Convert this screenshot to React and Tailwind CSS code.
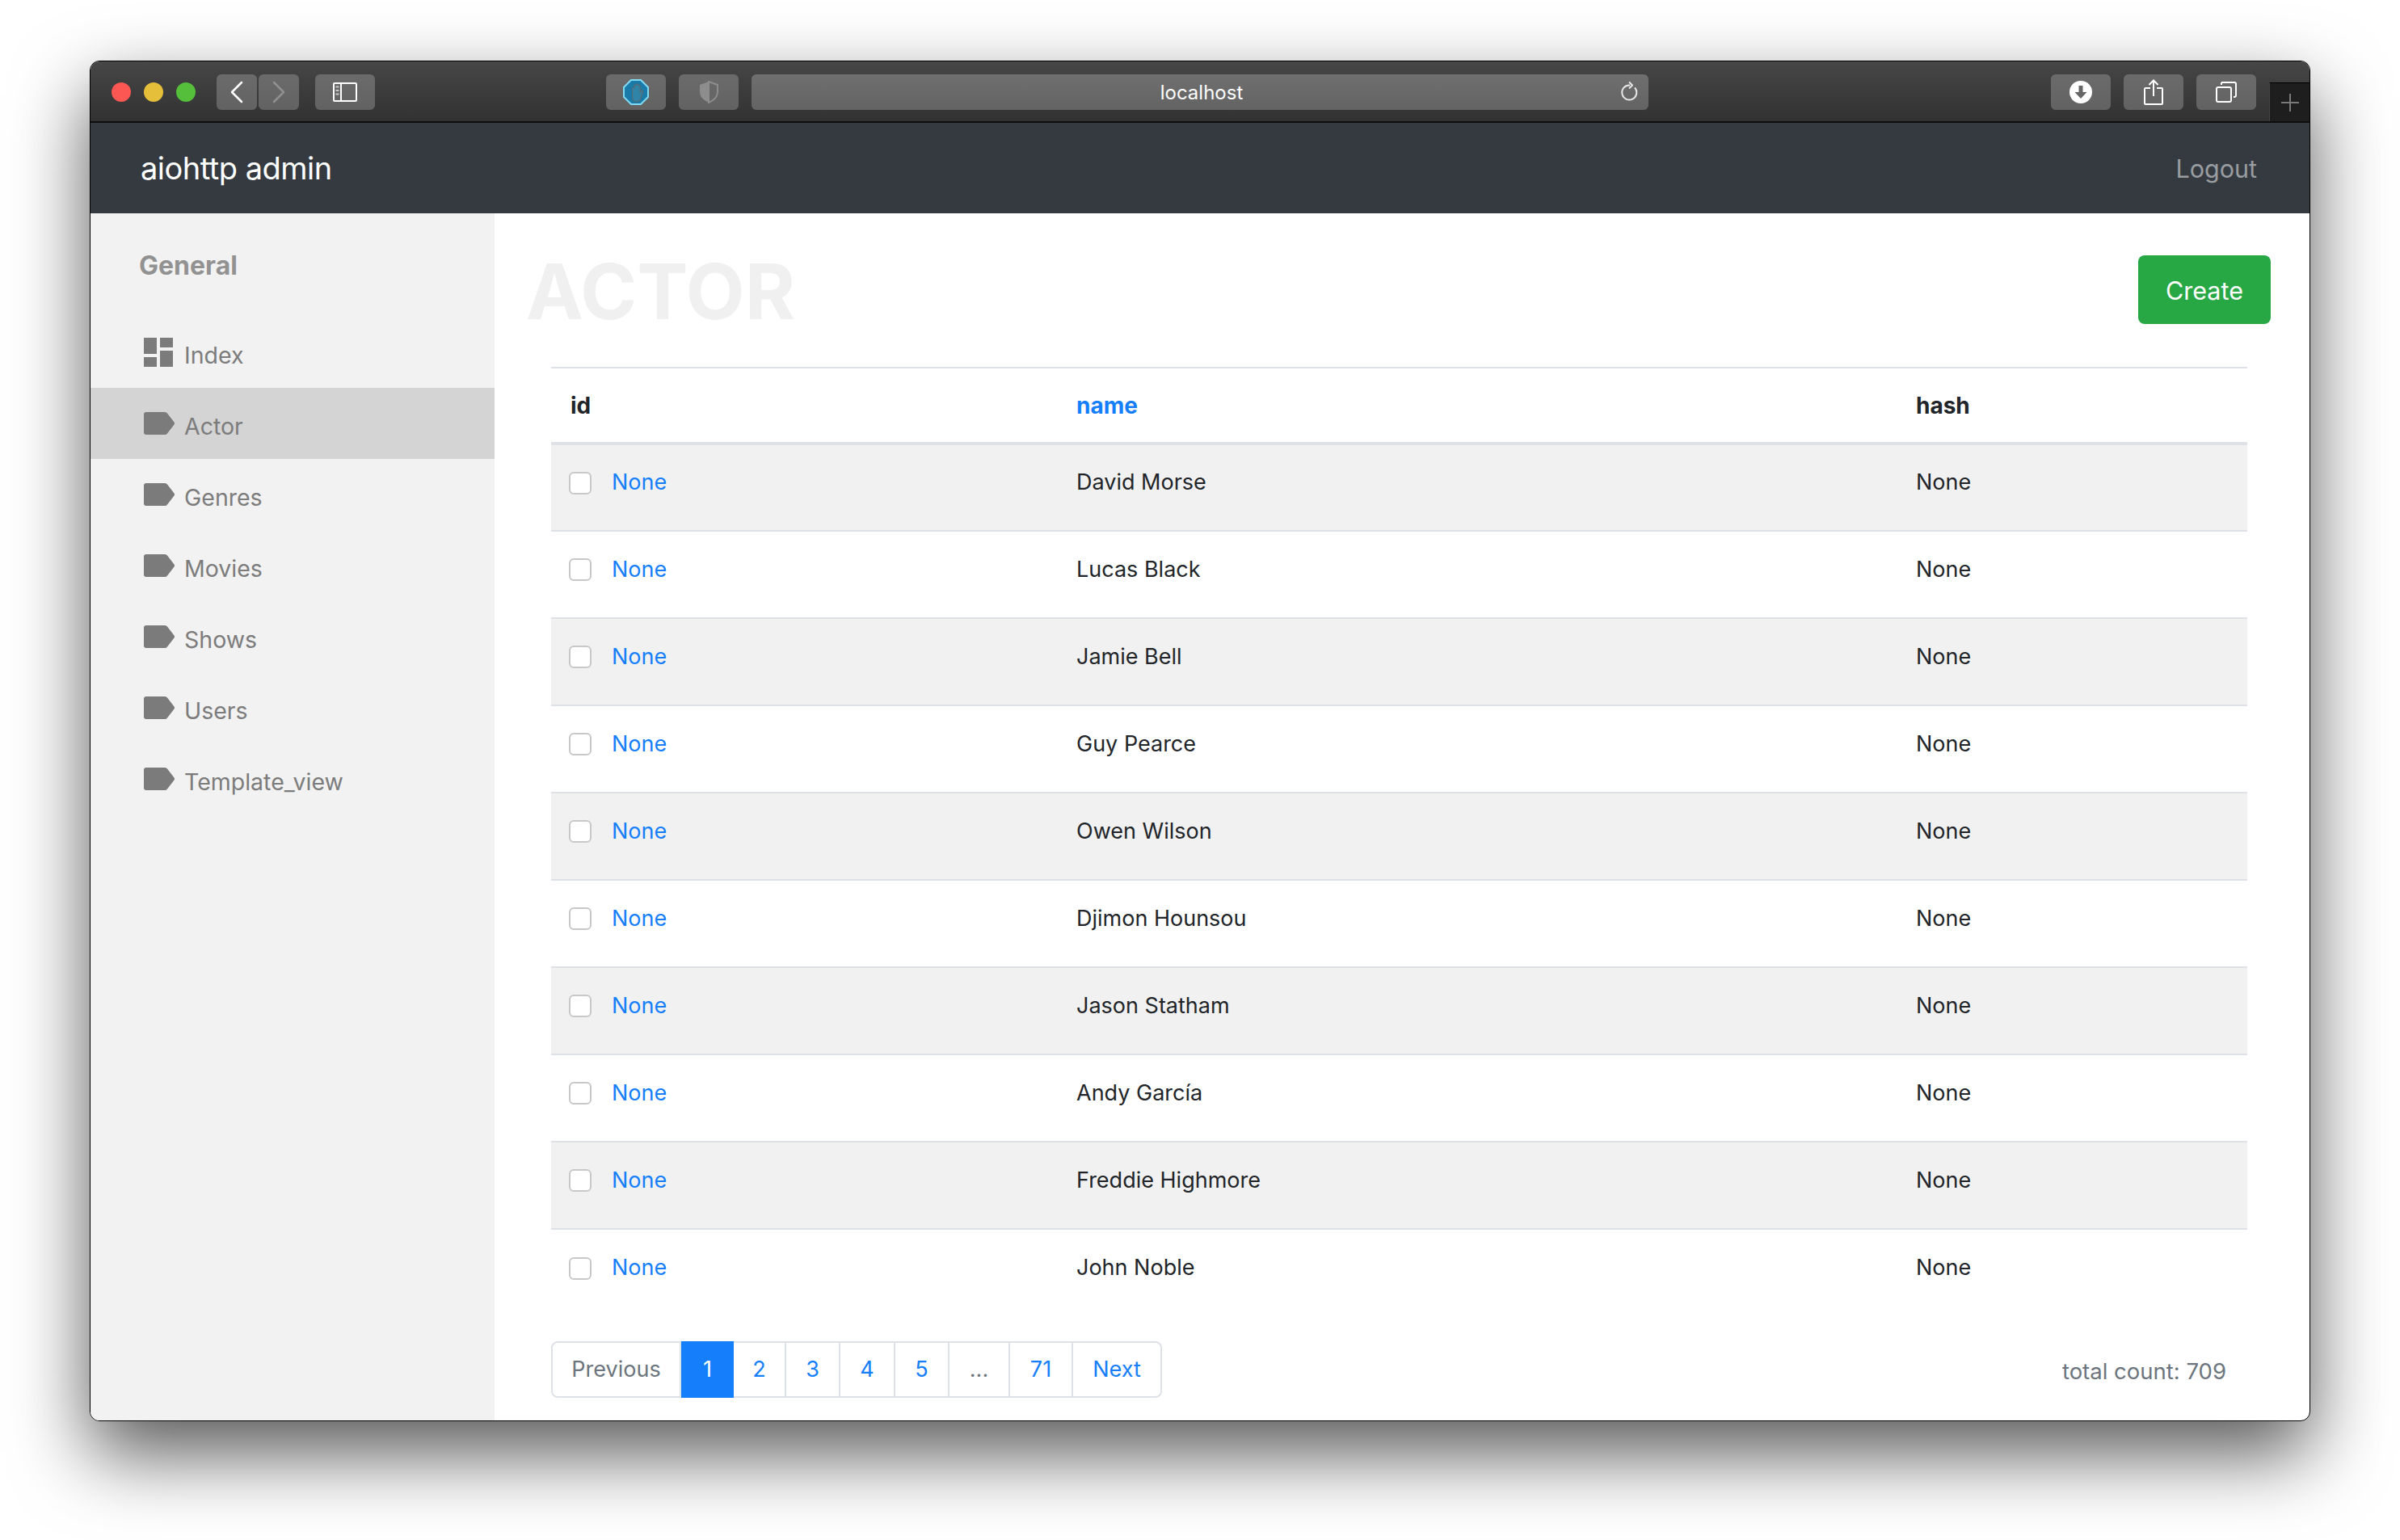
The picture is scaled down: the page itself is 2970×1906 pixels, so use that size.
const FONT = "font-['Inter','Noto_Sans',sans-serif]";

const actors = [
  "David Morse",
  "Lucas Black",
  "Jamie Bell",
  "Guy Pearce",
  "Owen Wilson",
  "Djimon Hounsou",
  "Jason Statham",
  "Andy García",
  "Freddie Highmore",
  "John Noble",
];

const navItems = ["Actor", "Genres", "Movies", "Shows", "Users", "Template_view"];

const pages = [
  { label: "1", w: "w-[65px]", active: true },
  { label: "2", w: "w-[65px]" },
  { label: "3", w: "w-[67px]" },
  { label: "4", w: "w-[68px]" },
  { label: "5", w: "w-[67px]" },
  { label: "...", w: "w-[75px]", muted: true },
  { label: "71", w: "w-[78px]" },
  { label: "Next", w: "w-[110px]" },
];

function ToolButton({ className = "", children }) {
  return (
    <div className={`h-[44px] flex items-center justify-center rounded-[6px] bg-gradient-to-b from-[#6b6b6c] to-[#626263] ${className}`}>
      {children}
    </div>
  );
}

function TagIcon() {
  return (
    <svg width="38" height="28" viewBox="0 0 38 28" className="shrink-0">
      <path d="M3 0H26Q28 0 29 1.500L37.500 12.500Q38.500 14 37.500 15.500L29 26.500Q28 28 26 28H3Q0 28 0 25V3Q0 0 3 0Z" fill="#7b7b7b" />
    </svg>
  );
}

function DashIcon() {
  return (
    <svg width="36" height="36" viewBox="0 0 36 36" className="shrink-0">
      <path d="M0 0H16V20H0ZM20 0H36V12H20ZM20 16H36V36H20ZM0 24H16V36H0Z" fill="#7b7b7b" />
    </svg>
  );
}

function TitleBar() {
  return (
    <div className="relative h-[76px] flex items-start pt-[16px] bg-gradient-to-b from-[#464646] to-[#323232] border-b-2 border-[#0d0d0d]">
      <div className="flex gap-[16px] pl-[26px] pt-[10px]">
        <span className="w-[24px] h-[24px] rounded-full bg-[#fc5753]" />
        <span className="w-[24px] h-[24px] rounded-full bg-[#e6bf3a]" />
        <span className="w-[24px] h-[24px] rounded-full bg-[#55bf3c]" />
      </div>
      <div className="flex gap-[2px] ml-[26px]">
        <ToolButton className="w-[50px]">
          <svg width="18" height="28" viewBox="0 0 18 28" fill="none" stroke="#fff" strokeWidth="2.500" strokeLinecap="round" strokeLinejoin="round">
            <path d="M15 2 3 14l12 12" />
          </svg>
        </ToolButton>
        <ToolButton className="w-[50px]">
          <svg width="18" height="28" viewBox="0 0 18 28" fill="none" stroke="#8f8f8f" strokeWidth="2.500" strokeLinecap="round" strokeLinejoin="round">
            <path d="M3 2l12 12L3 26" />
          </svg>
        </ToolButton>
      </div>
      <ToolButton className="w-[74px] ml-[20px]">
        <svg width="30" height="24" viewBox="0 0 30 24" fill="none">
          <rect x="1" y="1" width="28" height="22" rx="1" stroke="#fff" strokeWidth="2" />
          <path d="M10 1v22" stroke="#fff" strokeWidth="2" />
          <path d="M3.500 5.500h4M3.500 10h4M3.500 14.500h4" stroke="#c8c8c8" strokeWidth="2" />
        </svg>
      </ToolButton>
      <ToolButton className="w-[74px] ml-[286px]">
        <svg width="32" height="32" viewBox="0 0 32 32">
          <path d="M10 1H22L31 10V22L22 31H10L1 22V10Z" fill="#1a7aa8" stroke="#7fdaf2" strokeWidth="2" />
          <path
            d="M11.500 21V11.500a1.200 1.200 0 0 1 2.400 0V8a1.200 1.200 0 0 1 2.400 0V7a1.200 1.200 0 0 1 2.400 0V8.500a1.200 1.200 0 0 1 2.400 0V17l1.500-3a1.200 1.200 0 0 1 2.100 1l-2.600 8q-1.500 5-6 5t-4.600-7Z"
            fill="#2f84a8"
            stroke="#566b76"
            strokeWidth="1.200"
          />
        </svg>
      </ToolButton>
      <ToolButton className="w-[74px] ml-[16px]">
        <svg width="24" height="28" viewBox="0 0 24 28">
          <path d="M12 1 23 5V14Q23 22 12 27Z" fill="none" stroke="#8d8d8d" strokeWidth="2" />
          <path d="M12 1 1 5V14Q1 22 12 27Z" fill="#8d8d8d" />
        </svg>
      </ToolButton>
      <div className="relative w-[1110px] h-[44px] ml-[16px] flex items-center justify-center rounded-[6px] bg-gradient-to-b from-[#6f6f70] to-[#636364]">
        <span className={`${FONT} text-[24px] text-white translate-x-[2px] translate-y-[1px]`}>localhost</span>
        <svg width="26" height="28" viewBox="0 0 26 28" fill="none" stroke="#e8e8e8" strokeWidth="2" className="absolute right-[10px] top-[8px]">
          <path d="M19 8.500A9 9 0 1 1 13 5.500" />
          <path d="M12 1.500 16 5.500 12 9.500" strokeLinejoin="round" />
        </svg>
      </div>
      <ToolButton className="w-[74px] ml-[498px]">
        <svg width="28" height="28" viewBox="0 0 28 28">
          <circle cx="14" cy="14" r="14" fill="#fff" />
          <path d="M11.500 6h5v8h5l-7.500 8-7.500-8h5Z" fill="#656566" />
        </svg>
      </ToolButton>
      <ToolButton className="w-[74px] ml-[16px]">
        <svg width="24" height="32" viewBox="0 0 24 32" fill="none" stroke="#fff" strokeWidth="2">
          <path d="M8 11H2a1 1 0 0 0-1 1v18a1 1 0 0 0 1 1h20a1 1 0 0 0 1-1V12a1 1 0 0 0-1-1h-6" />
          <path d="M12 21V2M6.500 7 12 1.500 17.500 7" />
        </svg>
      </ToolButton>
      <ToolButton className="w-[74px] ml-[16px]">
        <svg width="26" height="26" viewBox="0 0 26 26" fill="none" stroke="#fff" strokeWidth="2">
          <rect x="1" y="7" width="18" height="18" rx="2" />
          <path d="M7 1h16a2 2 0 0 1 2 2v14a2 2 0 0 1-2 2h-1M7 1v3" />
        </svg>
      </ToolButton>
      {/* new tab button sits over the bar's bottom edge */}
      <div className="absolute right-0 top-[26px] bottom-0 w-[50px] flex items-center justify-center bg-[#1e1e1e] border-t border-l border-t-black border-l-[#444]">
        <svg width="24" height="24" viewBox="0 0 24 24" stroke="#7a7a7a" strokeWidth="2">
          <path d="M12 1v22M1 12h22" />
        </svg>
      </div>
    </div>
  );
}

function Sidebar() {
  return (
    <aside className="w-[500px] shrink-0 bg-[#f2f2f2] text-[#7c7c7c]">
      <div className="h-[128px] pl-[60px] pt-[45px] text-[32px] leading-[40px] font-bold text-[#929292]">
        General
      </div>
      <div className="h-[88px] flex items-center gap-[14px] pl-[66px] text-[28.500px]">
        <DashIcon />
        <span className="translate-y-[4px]">Index</span>
      </div>
      {navItems.map((name) => (
        <div
          key={name}
          className={`h-[88px] flex items-center gap-[12px] pl-[66px] text-[28.500px] ${name === "Actor" ? "bg-[#d4d4d4]" : ""}`}
        >
          <TagIcon />
          <span className="translate-y-[4px]">{name}</span>
        </div>
      ))}
    </aside>
  );
}

function Pagination() {
  return (
    <div className="flex h-[70px] text-[27px]">
      <div className="w-[161px] flex items-center justify-center bg-white text-[#6c757d] border-2 border-[#dee2e6] rounded-l-[8px]">
        Previous
      </div>
      {pages.map((p) => (
        <div
          key={p.label}
          className={`${p.w} flex items-center justify-center ${
            p.active
              ? "bg-[#157efb] text-white"
              : `border-y-2 border-r-2 border-[#dee2e6] ${p.muted ? "text-[#6c757d]" : "text-[#157efb]"}`
          } ${p.label === "Next" ? "rounded-r-[8px]" : ""}`}
        >
          {p.label}
        </div>
      ))}
    </div>
  );
}

export default function App() {
  return (
    <div className={`${FONT} min-h-[1906px] bg-white pt-[75px] pl-[111px] overflow-hidden`}>
      <div className="w-[2748px] h-[1684px] flex flex-col border border-black rounded-[12px] overflow-hidden shadow-[0_40px_95px_rgba(0,0,0,0.66)] bg-white">
        <TitleBar />
        <nav className="h-[112px] shrink-0 flex items-center justify-between bg-[#343a40] pl-[62px] pr-[65px]">
          <span className="text-[38px] tracking-[-0.5px] text-white">aiohttp admin</span>
          <span className="text-[30.500px] text-[#9a9da0] translate-y-[1px]">Logout</span>
        </nav>
        <div className="flex flex-1">
          <Sidebar />
          <main className="flex-1 text-[#212529]">
            <div className="flex items-center justify-between h-[85px] mt-[52px] pl-[39px] pr-[48px]">
              <h1 className="text-[95px] font-bold text-[#f0f0f0] leading-none translate-y-[2px]">ACTOR</h1>
              <button className="w-[164px] h-[85px] pt-[2px] rounded-[8px] bg-[#28a745] text-white text-[30.500px]">Create</button>
            </div>
            <div className="ml-[70px] mr-[77px] mt-[53px]">
              <table className="w-full table-fixed border-collapse text-[27px] border-t-2 border-[#dee2e6]">
                <colgroup>
                  <col className="w-[626px]" />
                  <col className="w-[1039px]" />
                  <col />
                </colgroup>
                <thead>
                  <tr className="h-[94px] border-b-4 border-[#dee2e6] text-left text-[28px]">
                    <th className="px-[24px] font-bold">id</th>
                    <th className="px-[24px] font-bold text-[#157efb]">name</th>
                    <th className="px-[24px] font-bold">hash</th>
                  </tr>
                </thead>
                <tbody>
                  {actors.map((name, i) => (
                    <tr key={name} className={`h-[108px] ${i < 9 ? "border-b-2 border-[#dee2e6]" : ""} ${i % 2 === 0 ? "bg-[#f1f1f1]" : ""}`}>
                      <td className="px-[22px] pb-[12px]">
                        <div className="flex items-center gap-[25px]">
                          <span className="w-[28px] h-[28px] rounded-[6px] bg-white border-2 border-[#c8c8c8]" />
                          <span className="text-[#157efb]">None</span>
                        </div>
                      </td>
                      <td className="px-[24px] pb-[12px]">{name}</td>
                      <td className="px-[24px] pb-[12px]">None</td>
                    </tr>
                  ))}
                </tbody>
              </table>
              <div className="flex items-center justify-between mt-[31px] pr-[26px]">
                <Pagination />
                <span className="text-[27.500px] text-[#6c757d] translate-y-[3px]">total count: 709</span>
              </div>
            </div>
          </main>
        </div>
      </div>
    </div>
  );
}
